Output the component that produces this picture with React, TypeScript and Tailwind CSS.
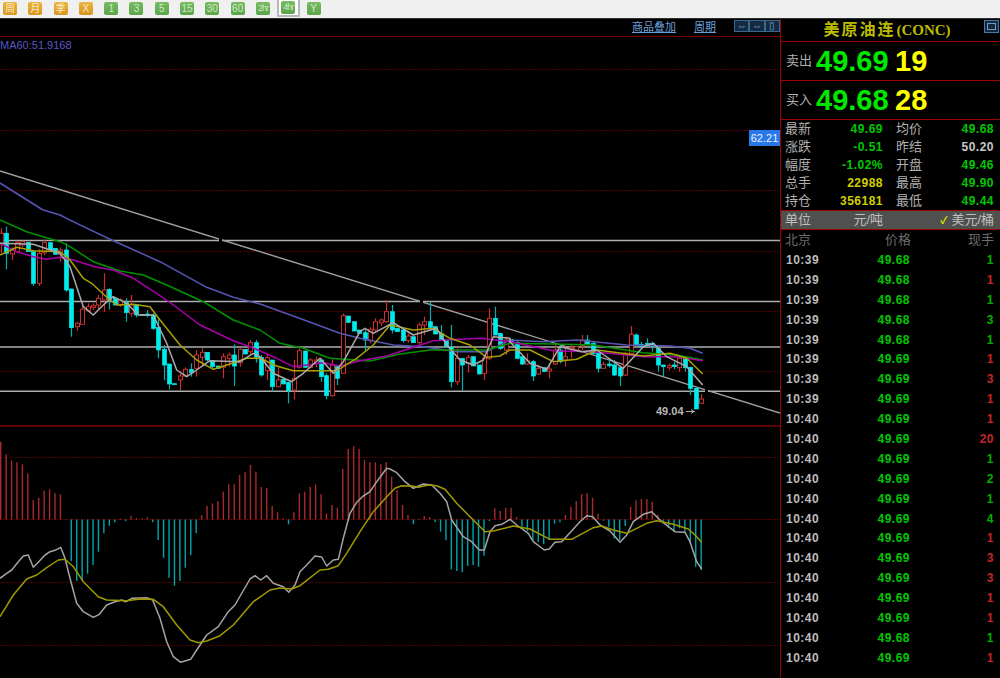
import React from "react";

type P = number[];
// [kind(1=up red,0=down cyan), bodyTop, bodyBottom, wickTop, wickBottom] in zoom-crop pixels
type C = [number, number, number, number, number];

const c4: C[] = [[1,70,100,55,130],[0,70,130,50,178],[1,120,132,112,150],[1,98,125,92,130],[1,95,105,92,112],[0,97,125,97,125],[0,125,220,120,228],[1,130,220,118,228],[1,98,128,88,135],[0,98,120,98,120],[0,115,133,115,133],[1,120,133,112,155],[0,120,240,100,245],[0,237,353,237,380],[1,340,350,335,362],[1,298,343,290,345],[1,290,302,280,305],[1,287,292,280,300],[1,265,285,255,300],[1,240,270,190,305],[0,238,268,235,298],[0,265,285,265,285],[1,270,285,265,290],[0,278,308,265,335],[1,285,310,255,320],[0,285,315,285,322],[0,314,316,314,316],[0,312,316,300,322],[0,315,355,310,360],[0,352,420,325,445],[0,418,465,405,510],[0,462,522,462,538],[0,521,523,521,523],[1,498,510,490,540],[1,478,498,472,500],[0,478,488,460,500],[1,435,475,420,500],[1,427,442,415,470],[0,427,450,427,455],[0,452,470,450,475],[0,468,475,468,475],[1,440,472,430,505],[1,435,445,428,470],[0,435,468,403,528],[1,418,458,415,470],[0,418,432,418,432],[1,398,425,390,432],[0,398,442,390,458]];
const c5: C[] = [[0,232,285,225,290],[1,233,272,225,300],[0,240,320,240,335],[1,300,320,262,322],[0,298,312,298,312],[0,308,332,305,370],[1,295,330,240,358],[1,212,262,200,265],[0,213,262,213,262],[1,240,262,235,265],[1,240,250,230,262],[0,240,290,235,305],[0,287,347,280,358],[1,255,347,238,350],[0,260,295,255,315],[1,107,280,100,282],[0,108,127,108,127],[0,125,153,125,153],[0,150,160,150,160],[0,158,180,150,215],[1,148,182,142,190],[1,125,150,115,155],[1,120,128,115,138],[1,95,125,60,128],[0,95,150,75,160],[0,145,155,145,155],[0,150,182,148,188],[1,168,182,160,188],[0,170,188,170,188],[1,135,188,128,195],[1,125,135,110,165],[0,125,142,65,150],[0,140,162,140,162],[0,160,180,135,182],[0,180,200,180,200],[0,202,305,135,322],[1,235,305,205,315],[0,235,255,235,332],[1,232,250,225,278],[0,230,258,230,258],[0,255,282,255,282],[1,235,280,225,300],[1,115,235,85,240],[0,115,165,80,165],[0,160,205,160,210],[1,180,210,170,225]];
const c6: C[] = [[0,118,128,118,128],[0,128,175,120,178],[0,170,192,170,195],[1,183,192,160,195],[0,185,228,180,243],[1,205,222,195,225],[0,203,215,203,215],[1,207,213,190,235],[1,150,192,130,195],[0,150,185,135,190],[1,170,180,140,200],[1,143,147,135,175],[1,140,150,140,150],[1,120,137,105,150],[0,120,132,105,135],[0,130,160,125,165],[0,160,205,155,218],[1,193,205,185,207],[0,192,197,180,203],[0,195,225,180,228],[0,203,228,203,258],[1,160,225,155,228],[1,103,160,78,165],[0,105,135,100,138],[0,133,140,125,140],[0,130,137,115,140],[0,130,140,125,155],[0,145,195,140,215],[0,195,200,195,228],[1,197,203,190,210],[0,195,200,185,208],[1,175,203,170,215],[0,173,203,170,215],[0,202,265,200,285],[0,265,327,262,327],[1,297,310,282,312]];

const hist7 = [50,88,107,112,118,145,225,218,197,193,205,208,283,408,468,468,446,420,380,325,302,292,280,288,273,279,280,277,292,345,398,458,482,468,428,390,325,270,243,235,228,200,178,178,150,142,120,140,186,188,243,262,280,298,262,205,200,186,178,208,265,240,248,132,72,64,72,105,112,112,118,112,155,195,240,270,298,282,273,276,292,320,346,433,438,442,423,420,425,392,288,250,258,248,248,276,305,318,345,352,358,345,296,292,270,245,228,207,205,218,266,287,305,340,345,303,245,226,222,222,230,270,295,308,320,310,320,355,425,435];

const X = (i: number) => 0.7 + i * 5.43;
const poly = (pts: P, ox: number, oy: number) => {
  let s = "";
  for (let i = 0; i < pts.length; i += 2) s += `${(pts[i] / 3 + ox).toFixed(1)},${(pts[i + 1] / 3 + oy).toFixed(1)} `;
  return s;
};
const lines: [string, string][] = [
  ["#5656b4", "0,183 43,210 " + poly([130,0,180,15,230,40,340,92,480,155,620,232,700,262], 0, 210) + poly([0,72,110,112,240,160,300,175,400,195,490,200,590,215,680,215], 260, 280) + poly([0,120,100,125,200,120,350,135,480,138,540,145,578,160], 510, 300)],
  ["#009400", poly([0,30,80,65,130,80,180,95,210,110,280,155,360,183,430,195,500,225,610,275,700,330,780,360], 0, 210) + poly([60,190,130,205,210,235,330,243,420,222,510,210,600,210,680,210], 260, 280) + poly([0,130,130,132,250,135,400,158,500,165,578,180], 510, 300)],
  ["#a800a8", poly([0,100,50,125,100,140,140,148,180,142,220,150,290,172,340,180,400,205,470,250,520,285,600,345,700,392,750,410], 0, 210) + poly([50,235,100,260,140,255,190,248,240,258,300,242,380,228,520,182,600,178,660,175], 260, 280) + poly([0,125,130,152,250,155,400,170,500,170,578,182], 510, 300)],
  ["#a8a000", poly([0,135,50,112,100,122,180,125,210,150,250,205,275,220,320,262,350,285,400,283,450,290,480,330,540,405,590,450,640,478,690,462,740,445], 0, 210) + poly([0,235,50,258,100,272,180,272,230,272,290,235,340,195,390,135,460,150,520,145,570,175,630,195,680,232,720,228], 260, 280) + poly([0,150,60,150,130,185,200,178,260,150,400,168,480,160,530,175,578,222], 510, 300)],
  ["#ababab", poly([0,100,100,103,180,130,210,170,250,290,280,315,310,285,340,260,380,280,415,315,460,315,500,400,530,480,560,500,590,480,630,452,720,455,760,430], 0, 210) + poly([0,230,40,280,95,305,130,280,180,235,220,280,250,245,300,155,315,145,340,160,400,128,460,165,530,145,560,195,600,240,640,255,670,240,700,170,750,175], 260, 280) + poly([0,125,60,190,110,208,150,140,215,155,260,150,340,205,400,140,430,130,470,170,530,200,578,255], 510, 300)],
];
const dif = poly([0,460,20,445,35,435,55,410,70,393,85,390,100,427,115,412,135,390,150,380,165,376,182,367,195,400,210,460,230,535,250,560,280,577,298,568,320,540,345,530,365,525,378,530,395,520,440,518,458,525,480,580,500,650,520,695,542,712,572,703,590,675,620,630,655,605,685,560,705,540,750,462,765,452,782,465,800,452,820,475,850,485,866,502,885,480,900,440,920,420,945,393,965,396,980,423,1000,405,1015,403,1030,340,1050,265,1070,232,1090,213,1110,200,1130,170,1160,130], 0, 425)
  + poly([0,132,20,143,45,170,70,190,100,177,125,180,150,205,170,230,185,285,220,335,245,350,268,375,283,375,300,320,315,302,335,298,360,283,380,300,415,325,430,350,463,375,478,372,495,352,515,350,570,290,590,272,608,275,630,300,660,318,690,352,710,330,730,290,760,268,785,260,810,285,835,305,855,320,885,322,900,350,920,410,935,432], 390, 425);
const dea = poly([0,575,40,510,80,462,110,450,140,428,175,405,195,403,220,425,250,470,295,515,320,525,380,527,420,522,460,523,490,545,530,600,570,645,595,653,620,648,660,632,700,600,760,530,810,495,840,489,875,492,900,482,960,435,985,433,1015,422,1040,385,1080,320,1120,260], 0, 425)
  + poly([0,205,15,190,35,182,65,183,85,187,115,180,140,182,165,193,200,235,250,285,285,320,310,318,350,308,370,303,420,312,480,343,545,343,610,308,635,303,670,315,710,325,770,295,800,287,850,298,895,312,915,330,935,352], 390, 425);

const candles: { c: C; oy: number; i: number }[] = [
  ...c4.map((c, i) => ({ c, oy: 210, i })),
  ...c5.map((c, i) => ({ c, oy: 280, i: i + 48 })),
  ...c6.map((c, i) => ({ c, oy: 300, i: i + 94 })),
];

function Chart() {
  const gridTop = [69, 130, 190, 251, 311, 371];
  const gridBot = [457, 582, 645];
  return (
    <svg width="780" height="659" viewBox="0 19 780 659" className="block">
      {gridTop.concat(gridBot).map((y) => (
        <line key={y} x1="0" x2="780" y1={y + 0.5} y2={y + 0.5} stroke="#4c0000" strokeWidth="1" strokeDasharray="2 1" />
      ))}
      <line x1="0" x2="780" y1="519.5" y2="519.5" stroke="#620000" strokeDasharray="2 1" />
      <line x1="0" x2="780" y1="36.5" y2="36.5" stroke="#800000" />
      <line x1="0" x2="780" y1="426" y2="426" stroke="#800000" strokeWidth="1.6" />
      {[240.5, 301.5, 347, 391.3].map((y) => (
        <line key={y} x1="0" x2="780" y1={y} y2={y} stroke="#aeaeae" strokeWidth="1.5" />
      ))}
      <line x1="0" y1="171" x2="780" y2="413" stroke="#a0a0a0" strokeWidth="1.4" />
      <rect x="219" y="238" width="3" height="5" fill="#000" />
      <rect x="420" y="299" width="3" height="5" fill="#000" />
      <rect x="705" y="389" width="3" height="5" fill="#000" />
      {candles.map(({ c, oy, i }) => {
        const x = Math.round(X(i)) + 0.5;
        const col = c[0] ? "#c83030" : "#00ecec";
        const t = c[1] / 3 + oy, b = c[2] / 3 + oy;
        return (
          <g key={i}>
            <line x1={x} x2={x} y1={c[3] / 3 + oy} y2={t} stroke={c[0] ? col : "#00b0b0"} strokeWidth="1.2" />
            <line x1={x} x2={x} y1={b} y2={c[4] / 3 + oy} stroke={c[0] ? col : "#00b0b0"} strokeWidth="1.2" />
            <rect x={x - 2} y={t} width="4" height={Math.max(b - t, 1)} fill={c[0] ? "#000" : col} stroke={col} strokeWidth={c[0] ? 1 : 0.7} />
          </g>
        );
      })}
      {lines.map(([col, pts]) => (
        <polyline key={col} points={pts} fill="none" stroke={col} strokeWidth="1.5" strokeLinejoin="round" />
      ))}
      <polyline points="686,411.5 695,411.5" stroke="#b0b0b0" fill="none" />
      <polyline points="691,409.5 694,411.5 691,413.5" stroke="#b0b0b0" fill="none" />
      {hist7.map((t, i) => {
        const y = t / 3 + 425;
        const up = y < 519;
        return (
          <line key={i} x1={X(i)} x2={X(i)} y1={519.5} y2={y} stroke={up ? "#a82a2a" : "#00a4ac"} strokeWidth="1.4" />
        );
      })}
      <polyline points={dif} fill="none" stroke="#a4a4a4" strokeWidth="1.5" strokeLinejoin="round" />
      <polyline points={dea} fill="none" stroke="#a09a00" strokeWidth="1.5" strokeLinejoin="round" />
    </svg>
  );
}

const tools: [string, number, boolean?][] = [
  ["周", 0], ["月", 0], ["季", 0], ["X", 0], ["1", 1], ["3", 1], ["5", 1], ["15", 1], ["30", 1], ["60", 1], ["2hr", 1], ["4hr", 1, true], ["Y", 1],
];

function Toolbar() {
  return (
    <div className="flex h-[19px] w-[1000px] shrink-0 items-start gap-[11.3px] border-b border-[#303030] bg-[#f0f0f0] pl-[3px] pt-[2px]">
      {tools.map(([t, g, sel]) => (
        <div
          key={t}
          className={
            sel
              ? "-mx-[4.5px] -mt-[2px] flex h-[17px] w-[23px] items-center justify-center rounded-b-[2px] border-x-2 border-b-2 border-[#b8b8b8] bg-white"
              : "flex"
          }
        >
          <div
            className={
              "flex h-[13px] w-[14px] items-center justify-center rounded-[2px] bg-linear-to-b leading-none " +
              (g ? "from-[#78bc64] to-[#5aa448] text-[#cde8c4]" : "from-[#eab444] to-[#d8941e] text-[#fbeabc]") +
              (t.length > 2 ? " text-[9px] tracking-[-1px]" : " text-[10px]")
            }
          >
            {t}
          </div>
        </div>
      ))}
    </div>
  );
}

const GREEN = "text-[#00c800]";
const stats: [string, string, string, string, string, string][] = [
  ["最新", "49.69", GREEN, "均价", "49.68", GREEN],
  ["涨跌", "-0.51", GREEN, "昨结", "50.20", "text-[#c8c8c8]"],
  ["幅度", "-1.02%", GREEN, "开盘", "49.46", GREEN],
  ["总手", "22988", "text-[#d0d000]", "最高", "49.90", GREEN],
  ["持仓", "356181", "text-[#d0d000]", "最低", "49.44", GREEN],
];
const trades: [string, string, string, number][] = [
  ["10:39","49.68","1",1],["10:39","49.68","1",0],["10:39","49.68","1",1],["10:39","49.68","3",1],["10:39","49.68","1",1],["10:39","49.69","1",0],["10:39","49.69","3",0],["10:39","49.69","1",0],["10:40","49.69","1",0],["10:40","49.69","20",0],["10:40","49.69","1",1],["10:40","49.69","2",1],["10:40","49.69","1",1],["10:40","49.69","4",1],["10:40","49.69","1",0],["10:40","49.69","3",0],["10:40","49.69","3",0],["10:40","49.69","1",0],["10:40","49.69","1",0],["10:40","49.68","1",1],["10:40","49.69","1",0],
];

const sans = "font-['Liberation_Sans','Noto_Sans_CJK_SC',sans-serif]";

function Quote({ label, price, vol }: { label: string; price: string; vol: string }) {
  return (
    <div className="flex h-[39px] items-center border-b border-[#a00000] pl-[5px]">
      <span className="w-[30px] text-[13px] text-[#b0b0b0]">{label}</span>
      <span className="w-[73px] text-[29px] font-bold leading-none text-[#00e800]">{price}</span>
      <span className="ml-[6px] text-[29px] font-bold leading-none text-[#ffff00]">{vol}</span>
    </div>
  );
}

function Side() {
  return (
    <aside className={"flex w-[220px] shrink-0 flex-col border-l border-[#a00000] " + sans}>
      <div className="relative flex h-[23px] items-center justify-center gap-[1px] border-b border-[#a00000] pr-[7px] text-[#bcbc00]">
        <span className="text-[16px] font-bold tracking-[2px]">美原油连</span>
        <span className="font-['Liberation_Serif',serif] text-[15px] font-bold">(CONC)</span>
        <div className="absolute right-[1px] top-[1px] flex h-[13px] w-[15px] items-center justify-center border border-[#4878a8] bg-[#14283c]">
          <div className="h-[7px] w-[9px] border border-[#6c9ccc]" />
        </div>
      </div>
      <Quote label="卖出" price="49.69" vol="19" />
      <Quote label="买入" price="49.68" vol="28" />
      <div className="flex flex-col border-b border-[#a00000]">
        {stats.map(([a, b, bc, d, e, ec]) => (
          <div key={a} className="flex h-[18px] items-center pl-[4px] pr-[6px] text-[13px] text-[#b0b0b0]">
            <span className="w-[28px]">{a}</span>
            <span className={"w-[70px] text-right text-[12px] font-bold tracking-[0.5px] " + bc}>{b}</span>
            <span className="ml-[13px] w-[28px]">{d}</span>
            <span className={"flex-1 text-right text-[12px] font-bold tracking-[0.5px] " + ec}>{e}</span>
          </div>
        ))}
      </div>
      <div className="flex h-[19px] items-center border-b border-[#a00000] bg-[#505050] pl-[4px] pr-[6px] text-[13px] text-[#c0c0c0]">
        <span className="w-[28px]">单位</span>
        <span className="w-[70px] text-right">元/吨</span>
        <span className="ml-auto mr-[4px] text-[10px] font-bold text-[#e8e800]">✓</span>
        <span>美元/桶</span>
      </div>
      <div className="flex h-[20px] items-center whitespace-nowrap pl-[4px] pr-[6px] text-[13px] text-[#6c6c6c]">
        <span className="w-[100px]">北京</span>
        <span>价格</span>
        <span className="ml-auto">现手</span>
      </div>
      <div className="flex flex-col">
        {trades.map(([t, p, q, g], i) => (
          <div key={i} className="flex h-[19.9px] items-center pl-[5px] pr-[6px] text-[12px] font-bold tracking-[0.5px]">
            <span className="w-[40px] text-[#bcbcbc]">{t}</span>
            <span className={"w-[84px] text-right " + GREEN}>{p}</span>
            <span className={"flex-1 text-right " + (g ? "text-[#00b000]" : "text-[#c02828]")}>{q}</span>
          </div>
        ))}
      </div>
    </aside>
  );
}

export default function App() {
  return (
    <div className={"flex h-[678px] w-[1000px] flex-col overflow-hidden bg-black " + sans}>
      <Toolbar />
      <div className="flex min-h-0 flex-1">
        <main className="relative w-[780px] shrink-0">
          <Chart />
          <div className="absolute left-0 top-[19px] text-[11px] leading-[14px] text-[#5858c0]">MA60:51.9168</div>
          <div className="absolute left-[632px] top-0 flex h-[17px] items-center whitespace-nowrap text-[11px] text-[#6ca0dc] underline">商品叠加</div>
          <div className="absolute left-[694px] top-0 flex h-[17px] items-center whitespace-nowrap text-[11px] text-[#6ca0dc] underline">周期</div>
          <div className="absolute right-0 top-[1px] flex h-[12px]">
            {["⇔", "⇔", "▯"].map((g, i) => (
              <div key={i} className="flex h-[12px] w-[15.3px] items-center justify-center border border-[#3c6890] bg-[#142a40] text-[10px] leading-none text-[#7aa8d4]">{g}</div>
            ))}
          </div>
          <div className="absolute right-0 top-[111px] flex h-[16px] w-[31px] items-center justify-center bg-[#2878e8] text-[11px] text-[#e8f0ff]">62.21</div>
          <div className="absolute left-[656px] top-[386px] text-[11px] font-bold leading-[13px] text-[#b8b8b8]">49.04</div>
        </main>
        <Side />
      </div>
    </div>
  );
}
